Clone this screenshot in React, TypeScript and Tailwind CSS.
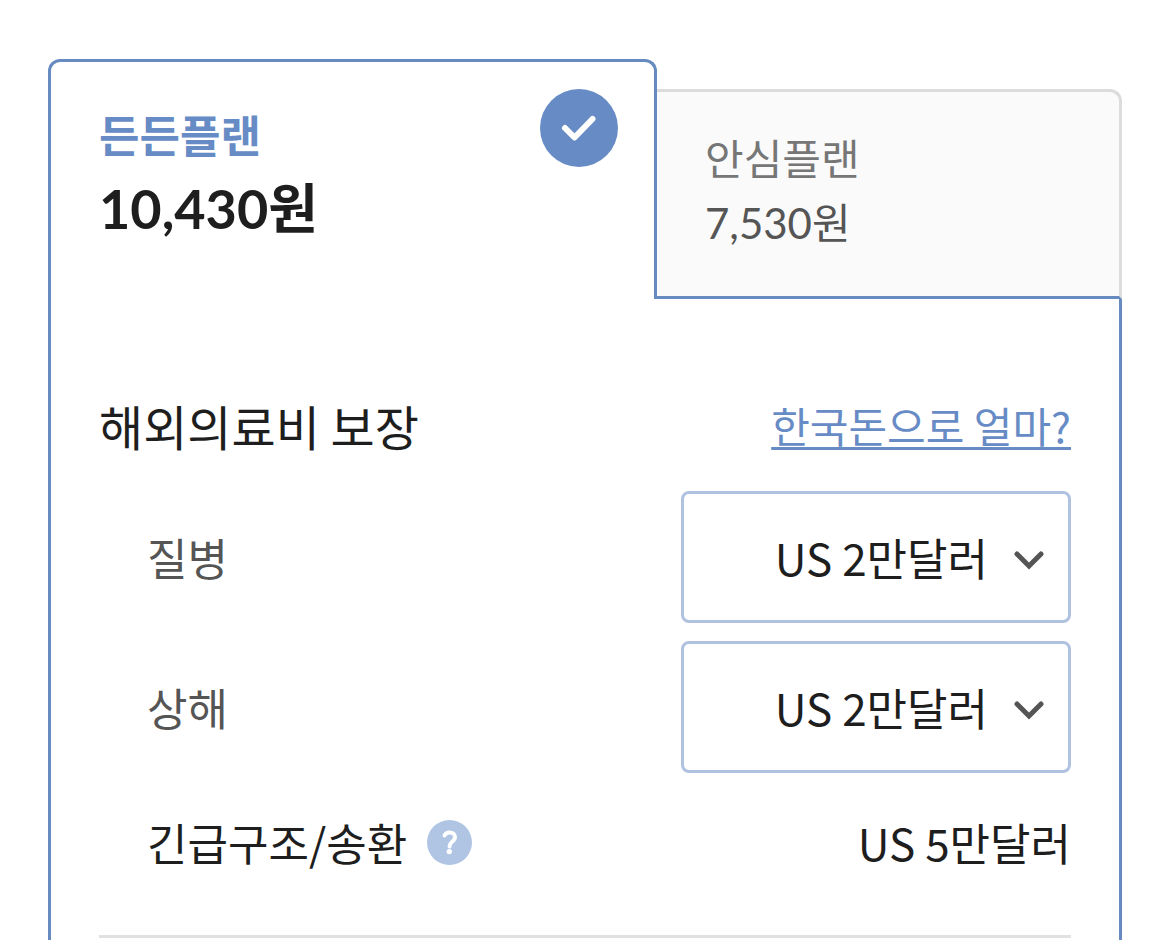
import React, { useState } from 'react';

const amounts = ['US 1만달러', 'US 2만달러', 'US 3만달러', 'US 5만달러'];

const plans = [
  { id: 'plus', name: '든든플랜', price: '10,430원' },
  { id: 'basic', name: '안심플랜', price: '7,530원' },
];

const CheckBadge = () => (
  <svg viewBox="0 0 78 78" className="size-[78px] shrink-0" aria-hidden="true">
    <circle cx="39" cy="39" r="39" fill="#678bc5" />
    <path
      d="M25 39 L34.5 48.5 L52.5 30"
      fill="none"
      stroke="#fff"
      strokeWidth="6"
      strokeLinecap="round"
      strokeLinejoin="round"
    />
  </svg>
);

const HelpButton = () => (
  <button type="button" aria-label="긴급구조/송환 도움말" className="shrink-0 cursor-pointer rounded-full">
    <svg viewBox="0 0 45 45" className="size-[45px]" aria-hidden="true">
      <circle cx="22.5" cy="22.5" r="22.5" fill="#b0c4e3" />
      <path
        d="M17.5 15.5 C18.5 13.4 20.4 12.5 22.7 12.5 C25.8 12.5 28 14.4 28 17 C28 19.4 26.6 20.6 25.2 21.7 C23.6 23 22.7 23.9 22.5 26.5"
        fill="none"
        stroke="#fff"
        strokeWidth="4"
        strokeLinecap="round"
        strokeLinejoin="round"
      />
      <circle cx="22.3" cy="31.6" r="2.7" fill="#fff" />
    </svg>
  </button>
);

type AmountRowProps = { id: string; label: string };

const AmountRow = ({ id, label }: AmountRowProps) => {
  const [amount, setAmount] = useState(amounts[1]);

  return (
    <div className="flex items-center justify-between pl-12">
      <label htmlFor={id} className="text-[44px] leading-[66px] text-[#555]">
        {label}
      </label>
      <div className="relative w-[390px]">
        <select
          id={id}
          value={amount}
          onChange={(e) => setAmount(e.target.value)}
          className="h-[132px] w-full cursor-pointer appearance-none rounded-lg border-3 border-[#afc2df] bg-white pr-20 text-right text-[44px] text-[#1e1e1e] [text-align-last:right]"
        >
          {amounts.map((item) => (
            <option key={item}>{item}</option>
          ))}
        </select>
        <svg
          viewBox="0 0 32 20"
          className="pointer-events-none absolute top-[59px] right-[26px] h-5 w-8"
          aria-hidden="true"
        >
          <path d="M4 4 L16 16 L28 4" fill="none" stroke="#555" strokeWidth="5" strokeLinecap="round" />
        </svg>
      </div>
    </div>
  );
};

const App = () => {
  const [selected, setSelected] = useState('plus');

  return (
    <main className="flex min-h-screen flex-col bg-white px-12 pt-[59px] font-['Noto_Sans_CJK_KR',sans-serif] text-[#1e1e1e]">
      {/* Plan tabs */}
      <div role="tablist" className="grid grid-cols-[609fr_465fr] items-end">
        {plans.map((plan, index) => {
          const active = plan.id === selected;
          return (
            <button
              key={plan.id}
              type="button"
              role="tab"
              aria-selected={active}
              onClick={() => setSelected(plan.id)}
              className={
                active
                  ? 'flex h-60 cursor-pointer items-start justify-between rounded-t-xl border-3 border-b-0 border-[#678bc0] bg-white pt-[27px] pr-9 pl-12 text-left'
                  : `flex h-[210px] cursor-pointer items-start border-3 border-b-[#678bc0] bg-[#fafafa] px-12 pt-8 text-left border-t-[#dcdcdc] ${
                      index === 0
                        ? 'rounded-tl-xl border-r-0 border-l-[#dcdcdc]'
                        : 'rounded-tr-xl border-l-0 border-r-[#dcdcdc]'
                    }`
              }
            >
              <span className="flex flex-col">
                <span
                  className={
                    active
                      ? 'mt-3 text-[44px] leading-[66px] font-bold text-[#678bc5]'
                      : 'text-[42px] leading-[66px] text-[#767676]'
                  }
                >
                  {plan.name}
                </span>
                <span
                  className={
                    active
                      ? "font-['Lato','Noto_Sans_CJK_KR',sans-serif] text-[54px] leading-[84px] font-bold"
                      : "font-['Lato','Noto_Sans_CJK_KR',sans-serif] text-[42px] leading-[66px] text-[#555]"
                  }
                >
                  {plan.price}
                </span>
              </span>
              {active && <CheckBadge />}
            </button>
          );
        })}
      </div>

      {/* Coverage */}
      <section className="grow border-x-3 border-[#678bc0] px-12 pt-[90px]">
        <div className="flex items-center justify-between">
          <h2 className="text-[48px] leading-[72px]">해외의료비 보장</h2>
          <a
            href="#krw"
            className="text-[42px] leading-[72px] text-[#678bc5] underline decoration-3 underline-offset-4 [text-decoration-skip-ink:none]"
          >
            한국돈으로 얼마?
          </a>
        </div>

        <div className="mt-[30px] flex flex-col gap-[18px]">
          <AmountRow id="illness" label="질병" />
          <AmountRow id="injury" label="상해" />
        </div>

        <div className="mt-[33px] flex items-center justify-between border-b-3 border-[#e1e1e1] pb-[57px] pl-12">
          <div className="flex items-center gap-5">
            <span className="text-[44px] leading-[72px]">긴급구조/송환</span>
            <HelpButton />
          </div>
          <span className="text-[44px] leading-[72px]">US 5만달러</span>
        </div>
      </section>
    </main>
  );
};

export default App;
